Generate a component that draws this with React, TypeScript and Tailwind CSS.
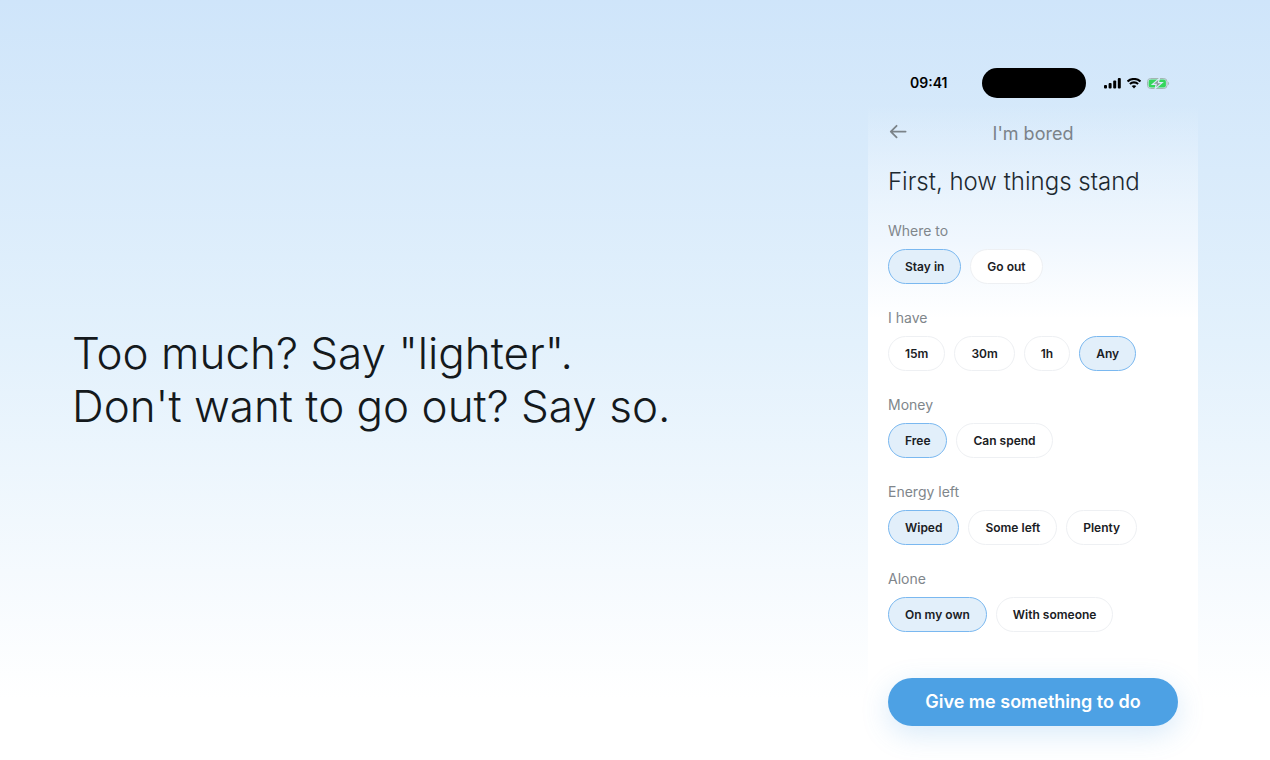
import React, { useState } from "react";

interface Question {
  label: string;
  options: string[];
}

const questions: Question[] = [
  { label: "Where to", options: ["Stay in", "Go out"] },
  { label: "I have", options: ["15m", "30m", "1h", "Any"] },
  { label: "Money", options: ["Free", "Can spend"] },
  { label: "Energy left", options: ["Wiped", "Some left", "Plenty"] },
  { label: "Alone", options: ["On my own", "With someone"] },
];

function SignalIcon() {
  return (
    <svg width="17" height="11" viewBox="0 0 17 11" fill="#000">
      <rect x="0" y="7" width="3" height="3.4" rx="1" />
      <rect x="4.6" y="5" width="3" height="5.4" rx="1" />
      <rect x="9.2" y="2.6" width="3" height="7.8" rx="1" />
      <rect x="13.8" y="0" width="3" height="10.4" rx="1" />
    </svg>
  );
}

function WifiIcon() {
  return (
    <svg width="14" height="11" viewBox="0 0 14 11" fill="none" stroke="#000" strokeWidth="2.1">
      <path d="M0.6 3.5C4.1 0.1 9.9 0.1 13.4 3.5" />
      <path d="M2.9 5.9C5.1 3.8 8.9 3.8 11.1 5.9" />
      <path d="M7 10.4L4.7 8.1C6 6.9 8 6.9 9.3 8.1Z" fill="#000" stroke="none" />
    </svg>
  );
}

function BatteryIcon() {
  return (
    <svg width="23" height="11" viewBox="0 0 23 11" fill="none">
      <rect x="0.5" y="0.5" width="19.5" height="10" rx="3.2" stroke="#a3b5b3" />
      <rect x="1.6" y="1.6" width="17.3" height="7.8" rx="2.2" fill="#35d65b" />
      <path d="M21.2 3.8V7.2C22.4 6.7 22.4 4.3 21.2 3.8Z" fill="#9db3ab" />
      <path
        d="M12.4 0.4L5.4 6.3H9.2L8.2 10.6L15.2 4.7H11.4Z"
        fill="#8b9c9a"
        stroke="#d8ebf8"
        strokeWidth="1.2"
      />
    </svg>
  );
}

function StatusBar() {
  return (
    <div className="flex items-center justify-between pl-5 pr-2">
      <span className="w-14 pl-0.5 text-sm font-semibold text-black">09:41</span>
      <div className="h-[30px] w-[104px] rounded-full bg-black" />
      <div className="flex items-center gap-1.5">
        <SignalIcon />
        <WifiIcon />
        <BatteryIcon />
      </div>
    </div>
  );
}

interface ChipProps {
  text: string;
  selected: boolean;
  onClick: () => void;
}

function Chip({ text, selected, onClick }: ChipProps) {
  return (
    <button
      type="button"
      aria-pressed={selected}
      onClick={onClick}
      className={
        selected
          ? "h-[35px] rounded-full border border-[#7ab8f0] bg-[#e2effa] px-4 text-xs font-semibold text-[#1a2024]"
          : "h-[35px] rounded-full border border-[#eef0f3] bg-white px-4 text-xs font-semibold text-[#1a2024]"
      }
    >
      {text}
    </button>
  );
}

export default function App() {
  const [answers, setAnswers] = useState<Record<string, string>>({
    "Where to": "Stay in",
    "I have": "Any",
    Money: "Free",
    "Energy left": "Wiped",
    Alone: "On my own",
  });

  return (
    <div className="flex min-h-screen items-stretch justify-between bg-linear-to-b from-[#cfe5fa] via-[#e3f1fc] via-45% to-white to-92% px-18 font-['Inter',sans-serif]">
      <h1 className="self-center font-['Inter',sans-serif] text-[44px] leading-[53px] font-light text-[#14191c]">
        Too much? Say "lighter".
        <br />
        Don't want to go out? Say so.
      </h1>

      {/* phone screen */}
      <main className="mt-12 w-[330px] shrink-0 bg-linear-to-b from-[#d6e9fa]/0 from-8% via-[#f0f7fe] via-27% to-white to-38% px-5 pt-5">
        <StatusBar />

        <header className="mt-5 grid grid-cols-[20px_1fr_20px] items-center">
          <button type="button" aria-label="Back" className="text-[#7b8389]">
            <svg width="20" height="20" viewBox="0 0 20 20" fill="none" stroke="currentColor" strokeWidth="1.8" strokeLinecap="round" strokeLinejoin="round">
              <path d="M17.6 7.6H2.8M8.6 1.8L2.8 7.6L8.6 13.4" />
            </svg>
          </button>
          <span className="text-center text-lg leading-8 text-[#7b8389]">I'm bored</span>
        </header>

        <h2 className="mt-4 text-2xl leading-8 font-light whitespace-nowrap text-[#1d2930]">
          First, how things stand
        </h2>

        <div className="mt-[23px] flex flex-col gap-6">
          {questions.map((q) => (
            <section key={q.label}>
              <h3 className="text-sm leading-5 text-[#80868b]">{q.label}</h3>
              <div className="mt-2 flex gap-[9px]">
                {q.options.map((option) => (
                  <Chip
                    key={option}
                    text={option}
                    selected={answers[q.label] === option}
                    onClick={() => setAnswers({ ...answers, [q.label]: option })}
                  />
                ))}
              </div>
            </section>
          ))}
        </div>

        <button
          type="button"
          className="mt-[46px] mb-8 h-12 w-full rounded-full bg-[#4da1e4] text-lg font-semibold text-white shadow-[0_8px_28px_rgba(77,161,228,0.22)]"
        >
          Give me something to do
        </button>
      </main>
    </div>
  );
}
